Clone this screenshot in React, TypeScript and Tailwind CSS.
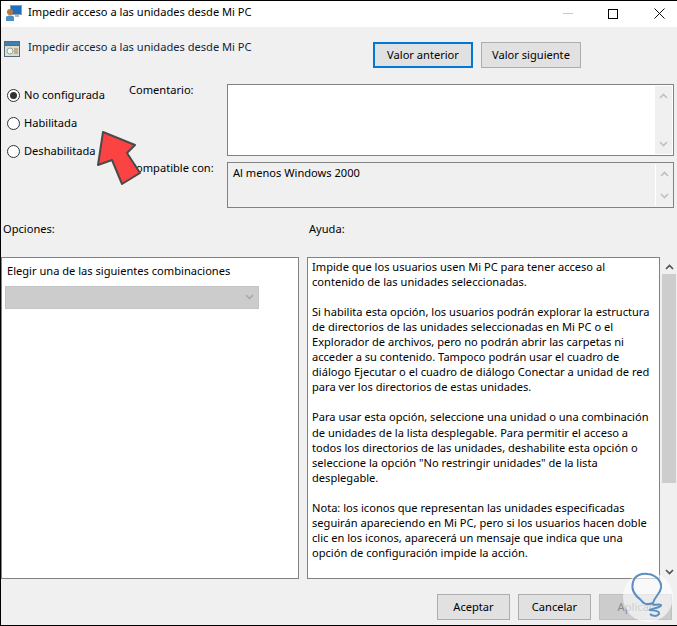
const helpText = [
  "Impide que los usuarios usen Mi PC para tener acceso al",
  "contenido de las unidades seleccionadas.",
  "",
  "Si habilita esta opción, los usuarios podrán explorar la estructura",
  "de directorios de las unidades seleccionadas en Mi PC o el",
  "Explorador de archivos, pero no podrán abrir las carpetas ni",
  "acceder a su contenido. Tampoco podrán usar el cuadro de",
  "diálogo Ejecutar o el cuadro de diálogo Conectar a unidad de red",
  "para ver los directorios de estas unidades.",
  "",
  "Para usar esta opción, seleccione una unidad o una combinación",
  "de unidades de la lista desplegable. Para permitir el acceso a",
  "todos los directorios de las unidades, deshabilite esta opción o",
  "seleccione la opción \"No restringir unidades\" de la lista",
  "desplegable.",
  "",
  "Nota: los iconos que representan las unidades especificadas",
  "seguirán apareciendo en Mi PC, pero si los usuarios hacen doble",
  "clic en los iconos, aparecerá un mensaje que indica que una",
  "opción de configuración impide la acción.",
  "",
  "Además, esta opción no impide que los usuarios usen programas",
];

function Chevron({ up, className }: { up?: boolean; className?: string }) {
  return (
    <svg width="9" height="6" viewBox="0 0 9 6" className={className}>
      <path d={up ? "M1 5 L4.5 1.5 L8 5" : "M1 1 L4.5 4.5 L8 1"} fill="none" stroke="currentColor" strokeWidth="1.6" />
    </svg>
  );
}

function Radio({ label, checked }: { label: string; checked?: boolean }) {
  return (
    <div className="flex items-center gap-[4px] h-[28px]">
      <span className="w-[13px] h-[13px] rounded-full border border-[#333333] bg-white flex items-center justify-center">
        {checked && <span className="w-[7px] h-[7px] rounded-full bg-[#333333]" />}
      </span>
      <span>{label}</span>
    </div>
  );
}

function SmallScroll({ className }: { className: string }) {
  return (
    <div className={`w-[17px] flex flex-col items-center justify-between py-[7px] text-[#c0c0c0] ${className}`}>
      <Chevron up />
      <Chevron />
    </div>
  );
}

function Btn({ label, disabled }: { label: string; disabled?: boolean }) {
  return (
    <button
      className={`w-[73px] h-[26px] border ${disabled ? "border-[#bfbfbf] bg-[#cccccc] text-[#8a8a8a]" : "border-[#adadad] bg-[#e1e1e1]"}`}
    >
      {label}
    </button>
  );
}

export default function App() {
  return (
    <div
      className="relative w-[677px] h-[626px] overflow-hidden bg-[#f0f0f0] border-t border-l border-b border-black text-[11.1px] text-black flex flex-col"
      style={{ fontFamily: '"Noto Sans", sans-serif' }}
    >
      {/* title bar */}
      <div className="h-[26px] bg-white flex items-center shrink-0">
        <svg width="16" height="16" viewBox="0 0 16 16" className="ml-[5px] -mt-[3px]">
          <rect x="4" y="0" width="12" height="10" fill="#8aa0b0" />
          <rect x="5" y="1" width="10" height="8" fill="#1f6fc0" />
          <rect x="9" y="10" width="4" height="2" fill="#b0b8c0" />
          <circle cx="4" cy="7" r="3" fill="#b5763f" />
          <path d="M0 16 L0 12 C1 10 7 10 8 12 L8 16 Z" fill="#4a90c8" />
        </svg>
        <span className="ml-[6px] -mt-[3px]">Impedir acceso a las unidades desde Mi PC</span>
        <div className="ml-auto flex items-center h-full -mt-px">
          <span className="w-[10px] h-px bg-[#c8c8c8] mr-[35px]" />
          <span className="w-[10px] h-[10px] border border-black mr-[36px]" />
          <svg width="11" height="11" viewBox="0 0 11 11" className="mr-[12px]">
            <path d="M0.5 0.5 L10.5 10.5 M10.5 0.5 L0.5 10.5" stroke="#111111" strokeWidth="1" fill="none" />
          </svg>
        </div>
      </div>

      {/* policy name and value buttons */}
      <div className="flex items-start h-[57px] shrink-0">
        <svg width="16" height="16" viewBox="0 0 16 16" className="ml-[3px] mt-[14px]">
          <rect x="0" y="0" width="16" height="16" fill="#4f6f80" />
          <rect x="1" y="1" width="14" height="3" fill="#3f7fb0" />
          <rect x="1" y="5" width="14" height="10" fill="#e4dcc8" />
          <circle cx="6" cy="10" r="3" fill="#f4f4f4" stroke="#90a898" />
          <rect x="10" y="7" width="4" height="6" fill="#b8b098" />
        </svg>
        <span className="ml-[8px] mt-[12px] w-[345px] text-[#10233d]">Impedir acceso a las unidades desde Mi PC</span>
        <button className="mt-[15px] w-[100px] h-[26px] border-2 border-[#0078d7] bg-[#e1e1e1]">
          Valor anterior
        </button>
        <button className="ml-[8px] mt-[15px] w-[100px] h-[26px] border border-[#adadad] bg-[#e1e1e1]">
          Valor siguiente
        </button>
      </div>

      {/* state, comment and compatibility */}
      <div className="flex h-[124px] shrink-0">
        <div className="w-[128px] pl-[6px] -mt-[3px]">
          <Radio label="No configurada" checked />
          <Radio label="Habilitada" />
          <Radio label="Deshabilitada" />
        </div>
        <div className="flex-1 flex flex-col gap-[6px] pr-[3px]">
          <div className="flex h-[72px]">
            <span className="w-[98px] -mt-[2px]">Comentario:</span>
            <div className="flex-1 flex justify-end border border-[#828282] bg-white p-px">
              <SmallScroll className="bg-[#f0f0f0]" />
            </div>
          </div>
          <div className="flex h-[46px]">
            <span className="w-[98px] -mt-[2px]">Compatible con:</span>
            <div className="flex-1 flex justify-between border border-[#828282] bg-[#f0f0f0] pl-[5px] pr-px py-px">
              <span className="pt-[1px]">Al menos Windows 2000</span>
              <SmallScroll className="border-l border-white" />
            </div>
          </div>
        </div>
      </div>

      {/* labels */}
      <div className="flex h-[49px] pt-[13px] shrink-0">
        <span className="w-[308px] pl-[2px]">Opciones:</span>
        <span>Ayuda:</span>
      </div>

      {/* options and help */}
      <div className="flex h-[322px] shrink-0">
        <div className="w-[298px] border border-[#828282] bg-white pt-[5px]">
          <div className="pl-[5px]">Elegir una de las siguientes combinaciones</div>
          <div className="mt-[6px] ml-[3px] w-[254px] h-[23px] bg-[#cccccc] border border-[#c4c4c4] flex items-center justify-end pr-[4px] text-[#aaaaaa]">
            <Chevron />
          </div>
        </div>
        <div className="ml-[8px] w-[353px] border border-[#828282] bg-white overflow-hidden pl-[4px] pt-[1px] whitespace-pre">
          {helpText.map((line, i) => (
            <div key={i} className="h-[15.05px] leading-[15px]">{line}</div>
          ))}
        </div>
        <div className="flex-1 flex flex-col bg-[#f0f0f0] pl-[2px] pr-px">
          <div className="h-[17px] flex justify-center pt-[7px] text-[#505050]">
            <Chevron up />
          </div>
          <div className="h-[209px] bg-[#cdcdcd]" />
          <div className="mt-auto pb-[4px] flex justify-center text-[#505050]">
            <Chevron />
          </div>
        </div>
      </div>

      {/* footer */}
      <div className="flex-1 flex justify-end gap-[8px] pr-[5px] pt-[15px]">
        <Btn label="Aceptar" />
        <Btn label="Cancelar" />
        <Btn label="Aplicar" disabled />
      </div>

      {/* red arrow annotation */}
      <svg width="46" height="56" viewBox="0 0 46 56" className="absolute left-[95px] top-[129px]">
        <path
          d="M7 2 L39 15 L31 23 L44 43 L26 54 L16 30 L2 35 Z"
          fill="#fb4343"
          stroke="#4a4a4a"
          strokeWidth="2"
          strokeLinejoin="round"
        />
      </svg>

      {/* watermark */}
      <div className="absolute left-[622px] top-[571px] w-[50px] h-[50px] rounded-full bg-white/60 flex items-center justify-center">
        <svg width="50" height="50" viewBox="0 0 50 50">
          <path
            d="M18 28 C11 23 8 17 10 10 C12 3 19 1 25 2 C33 3 39 9 38 16 C37 22 32 24 30 31 C29 35 35 31 38 33 C39 35 29 37 26 38 C31 38 37 39 36 42 C34 45 29 44 27 42 M18 28 C21 33 25 33 30 31"
            fill="none"
            stroke="#5a8fc0"
            strokeWidth="2"
          />
        </svg>
      </div>
    </div>
  );
}
